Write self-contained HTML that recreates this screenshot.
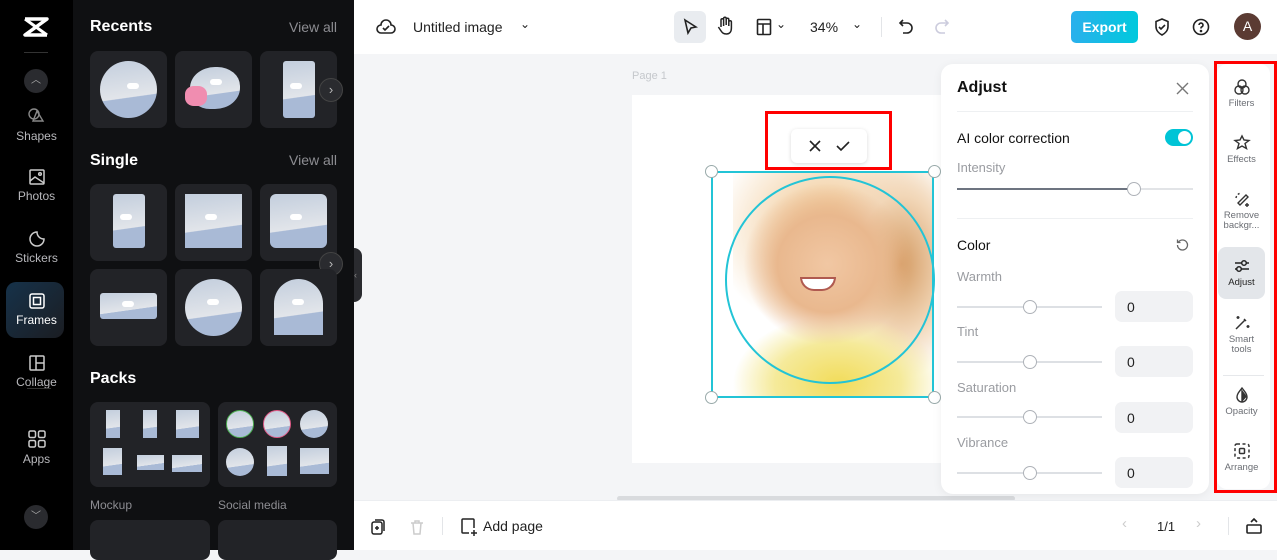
<!DOCTYPE html>
<html><head><meta charset="utf-8"><style>
*{box-sizing:border-box;margin:0;padding:0}
body{width:1277px;height:550px;overflow:hidden;font-family:"Liberation Sans",sans-serif;background:#f4f5f7;position:relative}
.abs{position:absolute}
.rail{left:0;top:0;width:73px;height:550px;background:#000}
.panel{left:73px;top:0;width:281px;height:550px;background:#0f1012}
.ri{position:absolute;left:0;width:73px;text-align:center;color:#b8b8bc;font-size:12px}
.ri svg{display:block;margin:0 auto 3px}
.h{color:#fff;font-weight:bold;font-size:16px;position:absolute;left:90px}
.va{color:#8d8d92;font-size:14px;position:absolute;right:17px}
.tile{position:absolute;width:77px;height:77px;background:#222327;border-radius:8px;overflow:hidden}
.sky{background:linear-gradient(172deg,#c3cedd 0%,#e2e5ea 62%,#a9bad6 63%);position:absolute}
.cl{position:absolute;width:12px;height:6px;background:#fff;border-radius:6px}
.arrow{position:absolute;width:24px;height:24px;border-radius:50%;background:#2a2b2f;border:1px solid #444;color:#bbb;font-size:13px;text-align:center;line-height:21px}
.top{left:354px;top:0;width:923px;height:54px;background:#fff}
.bot{left:354px;top:500px;width:923px;height:50px;background:#fff;border-top:1px solid #eceef1}
.adj{left:941px;top:64px;width:268px;height:430px;background:#fff;border-radius:12px;box-shadow:0 2px 10px rgba(0,0,0,.06)}
.lbl{position:absolute;left:16px;color:#9a9ca1;font-size:13px}
.sl{position:absolute;left:16px;width:145px;height:2px;background:#dde0e4}
.knob{position:absolute;width:14px;height:14px;border-radius:50%;background:#fff;border:1px solid #aeb2b8}
.val{position:absolute;left:174px;width:78px;height:31px;background:#f1f2f4;border-radius:7px;font-size:14px;color:#222;padding:8px 0 0 12px}
.rt{left:1217px;top:64px;width:53px;height:425px;background:#fff;border-radius:10px}
.ti{position:absolute;left:0;width:49px;text-align:center;color:#6b6e74;font-size:9.5px;line-height:10px}
.ti svg{display:block;margin:0 auto 3px}
</style></head><body>
<div class="abs rail">
  <svg style="position:absolute;left:23px;top:17px" width="26" height="20" viewBox="0 0 26 20"><path d="M2 2l22 0-22 16h22" stroke="#fff" stroke-width="3.5" fill="none" stroke-linejoin="round"/><path d="M2 2l22 16M24 2L2 18" stroke="#fff" stroke-width="3" fill="none"/></svg>
  <div style="position:absolute;left:24px;top:52px;width:24px;height:1px;background:#333"></div>
  <div style="position:absolute;left:24px;top:69px;width:24px;height:24px;border-radius:50%;background:#2a2b2f;color:#aaa;font-size:10px;text-align:center;line-height:24px">︿</div>
  <div class="ri" style="top:106px"><svg width="20" height="20" viewBox="0 0 20 20" fill="none" stroke="#888" stroke-width="1.4"><circle cx="7" cy="8" r="5"/><path d="M10 5l6 10H6z"/></svg>Shapes</div>
  <div class="ri" style="top:168px"><svg width="18" height="18" viewBox="0 0 18 18" fill="none" stroke="#ccc" stroke-width="1.5"><rect x="2" y="2" width="14" height="14" rx="1"/><path d="M2 13l5-4 9 6"/><circle cx="12" cy="6" r="1.3"/></svg>Photos</div>
  <div class="ri" style="top:230px"><svg width="18" height="18" viewBox="0 0 18 18" fill="none" stroke="#ccc" stroke-width="1.5"><path d="M16 9a7 7 0 1 1-7-7c0 4 3 7 7 7z"/></svg>Stickers</div>
  <div style="position:absolute;left:6px;top:282px;width:58px;height:56px;border-radius:10px;background:linear-gradient(135deg,#16324a,#1b1d22)"></div>
  <div class="ri" style="top:292px;color:#fff"><svg width="18" height="18" viewBox="0 0 18 18" fill="none" stroke="#fff" stroke-width="1.5"><rect x="2" y="2" width="14" height="14" rx="2"/><rect x="5.5" y="5.5" width="7" height="7"/></svg>Frames</div>
  <div class="ri" style="top:354px"><svg width="18" height="18" viewBox="0 0 18 18" fill="none" stroke="#ccc" stroke-width="1.5"><rect x="2" y="2" width="14" height="14" rx="1"/><path d="M8 2v14M8 9h8"/></svg>Collage</div>
  <div style="position:absolute;left:27px;top:388px;width:24px;height:1px;background:#333"></div>
  <div class="ri" style="top:429px"><svg width="20" height="20" viewBox="0 0 20 20" fill="none" stroke="#ccc" stroke-width="1.5"><rect x="2" y="2" width="6.5" height="6.5" rx="1.5"/><rect x="11.5" y="2" width="6.5" height="6.5" rx="1.5"/><rect x="2" y="11.5" width="6.5" height="6.5" rx="1.5"/><rect x="11.5" y="11.5" width="6.5" height="6.5" rx="1.5"/></svg>Apps</div>
  <div style="position:absolute;left:24px;top:505px;width:24px;height:24px;border-radius:50%;background:#2a2b2f;color:#aaa;font-size:10px;text-align:center;line-height:24px">﹀</div>
</div>
<div class="abs panel">
  <div style="position:absolute;left:281px;top:248px;width:8px;height:54px;background:#2a2b2f;border-radius:0 8px 8px 0;color:#888;font-size:9px;line-height:54px">‹</div>
</div>
<div class="h" style="top:18px">Recents</div><div class="va" style="top:19px;right:940px">View all</div>
<div class="tile" style="left:90px;top:51px"><div class="sky" style="left:10px;top:10px;width:57px;height:57px;border-radius:50%"></div><div class="cl" style="left:37px;top:32px"></div></div>
<div class="tile" style="left:175px;top:51px"><div class="sky" style="left:15px;top:16px;width:50px;height:42px;border-radius:50% 45% 50% 40%"></div><div style="position:absolute;left:10px;top:35px;width:22px;height:20px;border-radius:40%;background:#f08db0"></div><div class="cl" style="left:35px;top:28px"></div></div>
<div class="tile" style="left:260px;top:51px"><div class="sky" style="left:23px;top:10px;width:32px;height:57px;border-radius:3px"></div><div class="cl" style="left:30px;top:32px"></div></div>
<div class="arrow" style="left:319px;top:78px">›</div>
<div class="h" style="top:152px">Single</div><div class="va" style="top:152px;right:940px">View all</div>
<div class="tile" style="left:90px;top:184px"><div class="sky" style="left:23px;top:10px;width:32px;height:54px;border-radius:3px"></div><div class="cl" style="left:30px;top:30px"></div></div>
<div class="tile" style="left:175px;top:184px"><div class="sky" style="left:10px;top:10px;width:57px;height:54px"></div><div class="cl" style="left:30px;top:30px"></div></div>
<div class="tile" style="left:260px;top:184px"><div class="sky" style="left:10px;top:10px;width:57px;height:54px;border-radius:6px"></div><div class="cl" style="left:30px;top:30px"></div></div>
<div class="arrow" style="left:319px;top:252px">›</div>
<div class="tile" style="left:90px;top:269px"><div class="sky" style="left:10px;top:24px;width:57px;height:26px;border-radius:3px"></div><div class="cl" style="left:32px;top:32px"></div></div>
<div class="tile" style="left:175px;top:269px"><div class="sky" style="left:10px;top:10px;width:57px;height:57px;border-radius:50%"></div><div class="cl" style="left:32px;top:30px"></div></div>
<div class="tile" style="left:260px;top:269px"><div class="sky" style="left:14px;top:10px;width:49px;height:56px;border-radius:25px 25px 0 0"></div><div class="cl" style="left:32px;top:30px"></div></div>
<div class="h" style="top:370px">Packs</div>
<div class="tile" style="left:90px;top:402px;width:120px;height:85px"></div>
<div class="tile" style="left:218px;top:402px;width:119px;height:85px"></div>
<div class="sky" style="left:106px;top:410px;width:14px;height:28px"></div><div class="sky" style="left:143px;top:410px;width:14px;height:28px"></div><div class="sky" style="left:176px;top:410px;width:23px;height:28px"></div>
<div class="sky" style="left:103px;top:448px;width:19px;height:27px"></div><div class="sky" style="left:137px;top:455px;width:27px;height:15px"></div><div class="sky" style="left:172px;top:455px;width:30px;height:17px"></div>
<div class="sky" style="left:226px;top:410px;width:28px;height:28px;border-radius:50%;border:1.5px solid #4caf50"></div>
<div class="sky" style="left:263px;top:410px;width:28px;height:28px;border-radius:50%;border:1.5px solid #e05a87"></div>
<div class="sky" style="left:300px;top:410px;width:28px;height:28px;border-radius:50%"></div>
<div class="sky" style="left:226px;top:448px;width:28px;height:28px;border-radius:50%"></div>
<div class="sky" style="left:267px;top:446px;width:20px;height:30px"></div>
<div class="sky" style="left:300px;top:448px;width:29px;height:26px"></div>
<div style="position:absolute;left:90px;top:498px;color:#8d8d92;font-size:12px">Mockup</div>
<div style="position:absolute;left:218px;top:498px;color:#8d8d92;font-size:12px">Social media</div>
<div class="tile" style="left:90px;top:520px;width:120px;height:40px"></div>
<div class="tile" style="left:218px;top:520px;width:119px;height:40px"></div>

<div class="abs top">
  <svg style="position:absolute;left:22px;top:18px" width="20" height="18" viewBox="0 0 20 18" fill="none" stroke="#222" stroke-width="1.6"><path d="M5 15a4 4 0 0 1 0-8 5 5 0 0 1 10 0 4 4 0 0 1 0 8z"/><path d="M7 10l2 2 4-4"/></svg>
  <div style="position:absolute;left:59px;top:19px;font-size:14px;color:#222">Untitled image</div>
  <div style="position:absolute;left:166px;top:17px;font-size:12px;color:#222">⌄</div>
  <div style="position:absolute;left:320px;top:11px;width:32px;height:32px;background:#e9ecf0;border-radius:6px"></div>
  <svg style="position:absolute;left:328px;top:18px" width="16" height="18" viewBox="0 0 16 18" fill="none" stroke="#222" stroke-width="1.6"><path d="M3 2l11 7-5 1-3 5z"/></svg>
  <svg style="position:absolute;left:362px;top:16px" width="18" height="20" viewBox="0 0 18 20" fill="none" stroke="#222" stroke-width="1.5"><path d="M5 11V4a1.3 1.3 0 0 1 2.6 0v6M7.6 9V2.5a1.3 1.3 0 0 1 2.6 0V9M10.2 9V3.5a1.3 1.3 0 0 1 2.6 0V10M12.8 10V6a1.3 1.3 0 0 1 2.6 0v6c0 4-2 6-5 6s-4-1-6-4l-2-3"/></svg>
  <svg style="position:absolute;left:402px;top:18px" width="16" height="18" viewBox="0 0 16 18" fill="none" stroke="#222" stroke-width="1.6"><rect x="1.5" y="1.5" width="13" height="15" rx="1"/><path d="M1.5 6h13M7 6v10.5"/></svg>
  <div style="position:absolute;left:422px;top:17px;font-size:12px;color:#222">⌄</div>
  <div style="position:absolute;left:456px;top:19px;font-size:14px;color:#222">34%</div>
  <div style="position:absolute;left:498px;top:17px;font-size:12px;color:#222">⌄</div>
  <div style="position:absolute;left:527px;top:17px;width:1px;height:20px;background:#e3e5e8"></div>
  <svg style="position:absolute;left:544px;top:18px" width="16" height="18" viewBox="0 0 16 18" fill="none" stroke="#222" stroke-width="1.6"><path d="M5 2L2 5l3 3M2 5h7a5 5 0 0 1 0 10H5"/></svg>
  <svg style="position:absolute;left:580px;top:18px" width="16" height="18" viewBox="0 0 16 18" fill="none" stroke="#ccd" stroke-width="1.6"><path d="M11 2l3 3-3 3M14 5H7a5 5 0 0 0 0 10h4"/></svg>
  <div style="position:absolute;left:717px;top:11px;width:67px;height:32px;border-radius:5px;background:linear-gradient(90deg,#2ab0ec,#00c9dd);color:#fff;font-size:14px;font-weight:bold;text-align:center;line-height:32px">Export</div>
  <svg style="position:absolute;left:799px;top:17px" width="18" height="20" viewBox="0 0 18 20" fill="none" stroke="#222" stroke-width="1.6"><path d="M9 2l6 2.5v5c0 4-3 7-6 8.5-3-1.5-6-4.5-6-8.5v-5z"/><path d="M6 10l2 2 4-4"/></svg>
  <svg style="position:absolute;left:838px;top:18px" width="18" height="18" viewBox="0 0 18 18" fill="none" stroke="#222" stroke-width="1.6"><circle cx="9" cy="9" r="7.5"/><path d="M7 7a2 2 0 1 1 2.5 2c-.5.2-.5.6-.5 1.5"/><circle cx="9" cy="13" r=".5" fill="#222"/></svg>
  <div style="position:absolute;left:880px;top:13px;width:27px;height:27px;border-radius:50%;background:#5b3b33;color:#fff;font-size:14px;text-align:center;line-height:27px">A</div>
</div>

<div class="abs" style="left:632px;top:70px;color:#c5c8cc;font-size:11px">Page 1</div>
<div class="abs" style="left:632px;top:95px;width:310px;height:368px;background:#fff"></div>
<div class="abs" style="left:617px;top:496px;width:398px;height:5px;border-radius:3px;background:#d9dbde"></div>
<div class="abs" style="left:713px;top:172px;width:220px;height:226px;overflow:hidden;background:#fff">
  <div style="position:absolute;left:20px;top:0;width:210px;height:230px;background:radial-gradient(ellipse 40% 35% at 45% 40%,#f1c7a3 0%,#e9b88e 60%,transparent 100%),radial-gradient(ellipse 50% 30% at 50% 92%,#f2dc5a 0%,#f5ea9a 60%,transparent 100%),radial-gradient(ellipse 35% 50% at 80% 40%,#d49b63 0%,#f2d7b8 60%,transparent 100%),radial-gradient(ellipse 55% 45% at 45% 25%,#eebf82,transparent)"></div>
  <div style="position:absolute;left:87px;top:105px;width:36px;height:14px;border-radius:0 0 18px 18px;background:#fff;border:2px solid #b05a50"></div>
</div>
<div class="abs" style="left:711px;top:171px;width:223px;height:227px;border:2px solid #23c4d6"></div>
<div class="abs" style="left:725px;top:176px;width:210px;height:208px;border:2px solid #23c4d6;border-radius:50%"></div>
<div class="abs" style="left:705px;top:165px;width:13px;height:13px;border-radius:50%;background:#fff;border:1px solid #9aa"></div>
<div class="abs" style="left:928px;top:165px;width:13px;height:13px;border-radius:50%;background:#fff;border:1px solid #9aa"></div>
<div class="abs" style="left:705px;top:391px;width:13px;height:13px;border-radius:50%;background:#fff;border:1px solid #9aa"></div>
<div class="abs" style="left:928px;top:391px;width:13px;height:13px;border-radius:50%;background:#fff;border:1px solid #9aa"></div>
<div class="abs" style="left:765px;top:111px;width:127px;height:59px;border:3px solid #f00"></div>
<div class="abs" style="left:791px;top:129px;width:76px;height:34px;background:#fff;border-radius:6px;box-shadow:0 1px 4px rgba(0,0,0,.15)">
  <svg style="position:absolute;left:18px;top:11px" width="12" height="12" viewBox="0 0 12 12" stroke="#222" stroke-width="1.6"><path d="M1 1l10 10M11 1L1 11"/></svg>
  <svg style="position:absolute;left:45px;top:11px" width="14" height="12" viewBox="0 0 14 12" fill="none" stroke="#222" stroke-width="1.6"><path d="M1 6l4 4 8-8"/></svg>
</div>

<div class="abs adj">
  <div style="position:absolute;left:16px;top:15px;font-size:16px;font-weight:bold;color:#111">Adjust</div>
  <svg style="position:absolute;left:235px;top:18px" width="13" height="13" viewBox="0 0 13 13" stroke="#777" stroke-width="1.4"><path d="M1 1l11 11M12 1L1 12"/></svg>
  <div style="position:absolute;left:16px;top:47px;width:236px;height:1px;background:#eef0f2"></div>
  <div style="position:absolute;left:16px;top:66px;font-size:14px;color:#111">AI color correction</div>
  <div style="position:absolute;left:224px;top:65px;width:28px;height:17px;border-radius:9px;background:#00c4d6"><div style="position:absolute;right:2px;top:2px;width:13px;height:13px;border-radius:50%;background:#fff"></div></div>
  <div class="lbl" style="top:96px">Intensity</div>
  <div style="position:absolute;left:16px;top:124px;width:236px;height:2px;background:#e2e4e7"></div>
  <div style="position:absolute;left:16px;top:124px;width:178px;height:2px;background:#6d7480"></div>
  <div class="knob" style="left:186px;top:118px"></div>
  <div style="position:absolute;left:16px;top:154px;width:236px;height:1px;background:#eef0f2"></div>
  <div style="position:absolute;left:16px;top:173px;font-size:14px;color:#111">Color</div>
  <svg style="position:absolute;left:235px;top:174px" width="13" height="13" viewBox="0 0 13 13" fill="none" stroke="#666" stroke-width="1.3"><path d="M2.5 4A5 5 0 1 1 1.5 7M1.5 1.5V4.5h3"/></svg>
  <div class="lbl" style="top:205px">Warmth</div><div class="sl" style="top:242px"></div><div class="knob" style="left:82px;top:236px"></div><div class="val" style="top:227px">0</div>
  <div class="lbl" style="top:260px">Tint</div><div class="sl" style="top:297px"></div><div class="knob" style="left:82px;top:291px"></div><div class="val" style="top:282px">0</div>
  <div class="lbl" style="top:316px">Saturation</div><div class="sl" style="top:352px"></div><div class="knob" style="left:82px;top:346px"></div><div class="val" style="top:338px">0</div>
  <div class="lbl" style="top:371px">Vibrance</div><div class="sl" style="top:408px"></div><div class="knob" style="left:82px;top:402px"></div><div class="val" style="top:393px">0</div>
</div>

<div class="abs rt">
  <div class="ti" style="top:14px"><svg width="18" height="18" viewBox="0 0 18 18" fill="none" stroke="#333" stroke-width="1.4"><circle cx="9" cy="6" r="4"/><circle cx="6" cy="12" r="4"/><circle cx="12" cy="12" r="4"/></svg>Filters</div>
  <div class="ti" style="top:70px"><svg width="18" height="18" viewBox="0 0 18 18" fill="none" stroke="#333" stroke-width="1.4"><path d="M9 2l2 4 5 .5-4 3 1.5 5L9 12l-4.5 2.5L6 9.5l-4-3 5-.5z"/></svg>Effects</div>
  <div class="ti" style="top:126px"><svg width="18" height="18" viewBox="0 0 18 18" fill="none" stroke="#333" stroke-width="1.4"><path d="M5 13l8-8 2 2-8 8z" /><path d="M3 8a6 6 0 0 1 5-5" stroke-dasharray="2 2"/><path d="M14 13v4M12 15h4"/></svg>Remove<br>backgr...</div>
  <div style="position:absolute;left:1px;top:183px;width:47px;height:52px;border-radius:8px;background:#e3e6ea"></div>
  <div class="ti" style="top:193px;color:#222"><svg width="18" height="18" viewBox="0 0 18 18" fill="none" stroke="#222" stroke-width="1.5"><path d="M2 6h14M2 12h14"/><circle cx="11" cy="6" r="2.3" fill="#e3e6ea"/><circle cx="6" cy="12" r="2.3" fill="#e3e6ea"/></svg>Adjust</div>
  <div class="ti" style="top:250px"><svg width="18" height="18" viewBox="0 0 18 18" fill="none" stroke="#333" stroke-width="1.5"><path d="M3 15l9-9M11 5l2 2"/><path d="M5 2v3M3.5 3.5h3M15 11v3M13.5 12.5h3"/></svg>Smart<br>tools</div>
  <div style="position:absolute;left:6px;top:311px;width:41px;height:1px;background:#e6e8eb"></div>
  <div class="ti" style="top:322px"><svg width="18" height="18" viewBox="0 0 18 18" fill="none" stroke="#333" stroke-width="1.4"><path d="M9 2c3 4 5 6 5 9a5 5 0 0 1-10 0c0-3 2-5 5-9z"/><path d="M9 16V5c2 3 4 4.5 4 6.5" fill="#333"/></svg>Opacity</div>
  <div class="ti" style="top:378px"><svg width="18" height="18" viewBox="0 0 18 18" fill="none" stroke="#333" stroke-width="1.5"><rect x="2" y="2" width="14" height="14" rx="2" stroke-dasharray="3 2.5"/><rect x="6.5" y="6.5" width="5" height="5" rx="1"/></svg>Arrange</div>
</div>
<div class="abs" style="left:1214px;top:61px;width:63px;height:432px;border:3px solid #f00"></div>

<div class="abs bot">
  <svg style="position:absolute;left:16px;top:17px" width="16" height="18" viewBox="0 0 16 18" fill="none" stroke="#222" stroke-width="1.5"><rect x="2" y="4" width="10" height="12" rx="2"/><path d="M5 2h7a2 2 0 0 1 2 2v9"/><path d="M7 8v4M5 10h4"/></svg>
  <svg style="position:absolute;left:55px;top:17px" width="16" height="18" viewBox="0 0 16 18" fill="none" stroke="#ccc" stroke-width="1.5"><path d="M2 5h12M6 5V3h4v2M4 5l1 11h6l1-11"/></svg>
  <div style="position:absolute;left:88px;top:16px;width:1px;height:18px;background:#e3e5e8"></div>
  <svg style="position:absolute;left:106px;top:16px" width="18" height="20" viewBox="0 0 18 20" fill="none" stroke="#222" stroke-width="1.5"><path d="M9 16H3a1 1 0 0 1-1-1V3a1 1 0 0 1 1-1h10a1 1 0 0 1 1 1v8"/><path d="M14 13v6M11 16h6"/></svg>
  <div style="position:absolute;left:129px;top:17px;font-size:14px;color:#222">Add page</div>
  <div style="position:absolute;left:768px;top:14px;font-size:15px;color:#ccc">‹</div>
  <div style="position:absolute;left:803px;top:18px;font-size:13px;color:#222">1/1</div>
  <div style="position:absolute;left:842px;top:14px;font-size:15px;color:#ccc">›</div>
  <div style="position:absolute;left:874px;top:16px;width:1px;height:18px;background:#e3e5e8"></div>
  <svg style="position:absolute;left:891px;top:16px" width="18" height="18" viewBox="0 0 18 18" fill="none" stroke="#222" stroke-width="1.6"><rect x="2" y="8" width="14" height="8" rx="1"/><path d="M6 5l3-3 3 3"/></svg>
</div>
</body></html>
